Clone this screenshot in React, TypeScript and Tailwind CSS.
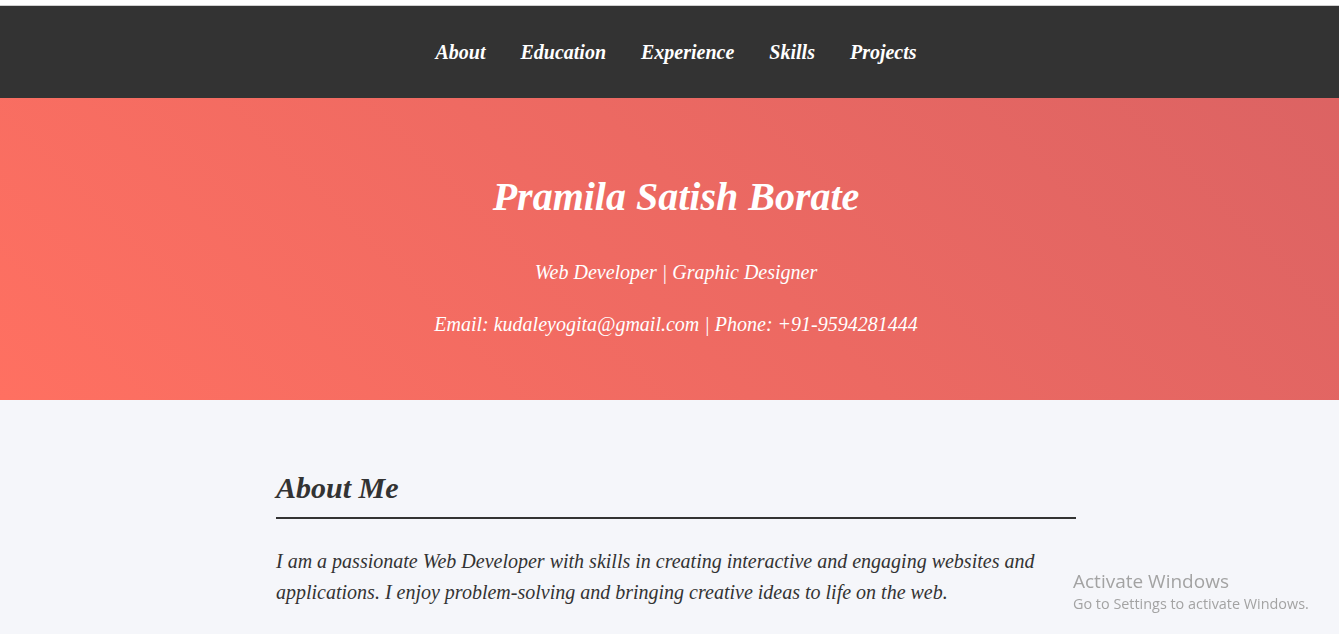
import React from 'react';

const links = ['About', 'Education', 'Experience', 'Skills', 'Projects'];

export default function App() {
  return (
    <div className="min-h-screen bg-[#f5f6fa] font-['Liberation_Serif','Times_New_Roman',serif] text-[#333] italic">
      <div className="h-[5px] bg-white" />

      {/* nav */}
      <nav className="border-t border-[#cfcfcf] bg-[#333] pl-[13px]">
        <ul className="flex h-[92px] items-center justify-center gap-[35px]">
          {links.map((l) => (
            <li key={l}>
              <a href="#" className="text-[20px] font-bold leading-[32px] text-white">
                {l}
              </a>
            </li>
          ))}
        </ul>
      </nav>

      {/* header */}
      <header className="bg-[linear-gradient(45deg,#ff7061,#dc6363)] pl-[13px] pt-[67px] pb-[60px] text-center text-white">
        <h1 className="text-[40px] font-bold leading-[64px]">Pramila Satish Borate</h1>
        <p className="mt-[27px] text-[20px] leading-[32px]">Web Developer | Graphic Designer</p>
        <p className="mt-[20px] text-[20px] leading-[32px]">
          Email: kudaleyogita@gmail.com | Phone: +91-9594281444
        </p>
      </header>

      {/* about */}
      <section className="pl-[13px] pt-[68px]">
        <div className="mx-auto w-[800px]">
          <h2 className="border-b-2 border-[#333] pb-[9px] text-[30px] font-bold leading-[40px]">About Me</h2>
          <p className="mt-[27px] text-[20px] leading-[31px]">
            I am a passionate Web Developer with skills in creating interactive and engaging websites and
            applications. I enjoy problem-solving and bringing creative ideas to life on the web.
          </p>
        </div>
      </section>

      {/* windows watermark */}
      <div className="fixed left-[1073px] top-[569px] not-italic font-['Open_Sans','Noto_Sans',sans-serif] text-[#a3a3a3]">
        <div className="text-[19px] leading-[25px]">Activate Windows</div>
        <div className="text-[14.4px] leading-[20px]">Go to Settings to activate Windows.</div>
      </div>
    </div>
  );
}
